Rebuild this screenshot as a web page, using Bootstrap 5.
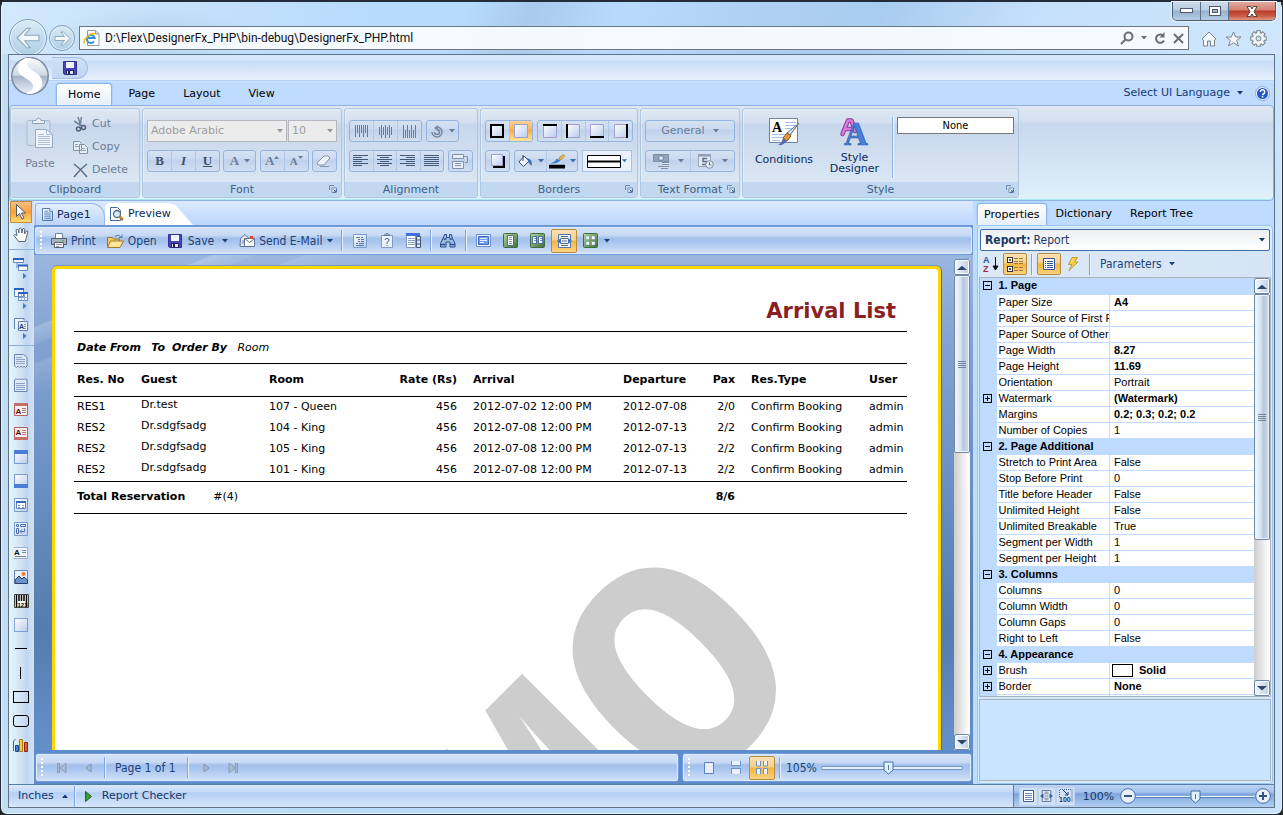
<!DOCTYPE html>
<html lang="en">
<head>
<meta charset="utf-8">
<meta name="viewport" content="width=device-width, initial-scale=1">
<title>DesignerFx_PHP</title>
<link href="https://cdn.jsdelivr.net/npm/bootstrap@5.3.0/dist/css/bootstrap.min.css" rel="stylesheet">
<style>
:root{--ui:"DejaVu Sans",Verdana,sans-serif;--cond:"DejaVu Sans Condensed","DejaVu Sans",Tahoma,sans-serif;--navy:#0b2a5e}
body{font:11px/14px var(--ui);color:#000;background:#222;overflow:hidden}
button{font:inherit;color:inherit;background:none;border:0;padding:0;display:flex;align-items:center;justify-content:center;white-space:nowrap}
svg{display:block;flex:none}
.cond{font:12px/16px var(--cond)}
.fill0{flex:1 1 0;min-width:0;min-height:0}
/* window frame */
.win{border:1px solid #232c38;border-top-width:2px;border-radius:7px;padding:0 7px 6px;background:linear-gradient(90deg,#c4def4 0,#b9dcfa 30%,#b4daf9 70%,#c9e4fb 100%);box-shadow:inset 0 0 0 1px #e7f4fd}
.chrome{height:52px;background:radial-gradient(ellipse 100px 30px at 150px 36px,#a3c6dc80,#0000),linear-gradient(115deg,#d3e9fb 0,#c7e1fa 12%,#b8dcfd 28%,#b6dbfd 36%,#a9caea 41%,#b8dbfc 48%,#b0d3f3 56%,#a8ccef 68%,#c5e0fb 80%,#cfe6fc 100%);margin:0 -6px;padding:24px 14px 0 7px;gap:2px}
.navc{border-radius:50%;border:1px solid #7f9fb9;background:linear-gradient(#d9ebf7,#afcee4);box-shadow:inset 0 0 0 1px #e8f3fa}
.nav1{width:38px;height:38px;margin-top:-7px}
.nav2{width:26px;height:26px;margin:-1px 0 0}
.addr{height:24px;border:1px solid #6d7680;background:#f9fcffee;padding:0 4px 0 3px;margin-left:2px}
.addr input{border:0;background:none;outline:0;font:12px/18px Roboto,"Noto Sans",sans-serif;color:#111;padding:0 0 0 5px}
.capt{position:absolute;top:0;right:6px;height:19px;border:1px solid #4d5d73;border-top:0;border-radius:0 0 5px 5px;overflow:hidden;box-shadow:0 0 0 1px #e8f3fb}
.capt button{width:28px;background:linear-gradient(#cddcec 0,#b9cce1 45%,#98b1cd 50%,#b5cde4 100%);border-right:1px solid #5d6f88}
.capt button.cx{width:46px;background:linear-gradient(#e3a99e 0,#d27f70 45%,#b93a27 50%,#c9604b 80%,#e89b83 100%);border:0}
.app{border:1px solid #5f7487;background:#bfdbff}
.quick{height:26px;background:linear-gradient(#d7e7fb 0,#d7e7fb 5px,#c8dcf7 6px,#e5f0fd 24px);border-bottom:1px solid #b0d2f8;padding:2px 0 0 43px}
.quick button{width:36px;height:22px;border:1px solid #a4bfe5;border-left:0;border-radius:0 11px 11px 0;background:linear-gradient(#cfe0f6,#c2d7f2)}
.orb{position:absolute;left:9px;top:54px;z-index:3}
.tabs{height:24px;padding-left:47px;background:linear-gradient(#cfe3fd 0,#bfdbff 2px);gap:4px}
.tabs .rt{height:22px;padding:0 12px;align-self:flex-end}
.rt.on{border:1px solid #8db7ea;border-bottom:0;border-radius:4px 4px 0 0;background:linear-gradient(#fff 0,#e6effa 100%);padding:0 11px;box-shadow:inset 1px 1px 0 #fff,0 0 2px #79b5f5}
.ribbon{height:96px;border:1px solid #8db2e3;border-radius:4px;background:linear-gradient(#dfe8f3 0,#d3dff0 16px,#c8d8ed 17px,#dcebf7 85%,#dff3fc 100%);padding:2px 0;gap:2px;box-shadow:inset 0 -1px #a9e8f7}
.grp{height:90px;border:1px solid #aec7e0;border-radius:3px;background:linear-gradient(#dfe8f3 0,#d3dff0 14px,#c7d6eb 15px,#d9e6f3 72px);box-shadow:inset 1px 1px #f2f7fc80}
.grp>footer{height:15px;background:#c1d8f0;color:#3e5f87;text-align:center;line-height:15px;position:relative;border-radius:0 0 3px 3px}
.grp>footer svg{position:absolute;right:4px;top:3px}
.grp>.gb{height:73px;padding:11px 4px 0;gap:8px}
.dim{color:#6b7e96}
.bset{height:22px;border:1px solid #95b5df;border-radius:3px;background:linear-gradient(#d5e2f3 0,#cbdaf0 40%,#bfd1ec 45%,#d1dff1 100%);overflow:hidden}
.bset button{width:24px;height:20px;border-left:1px solid #b0c7e7}
.bset button:first-child{border-left:0;width:23px}
.bset .w32{width:31px!important}.bset .wide{width:88px!important}.bset .half{width:44px!important;gap:8px}
.gap4{gap:5px}
.on-o{background:linear-gradient(#f9d49a 0,#fbb35a 40%,#fca643 45%,#ffe699 100%)!important}
.fsel{height:22px;border:1px solid #b5b9bf;border-radius:0;background-color:#ececec;appearance:none;color:#9d9d9d!important;font:11px/20px var(--ui);padding:0 14px 0 3px;opacity:1;background-image:url("data:image/svg+xml,%3Csvg xmlns='http://www.w3.org/2000/svg' width='6' height='4'%3E%3Cpath d='M0 0h6L3 3.500z' fill='%23959595'/%3E%3C/svg%3E");background-repeat:no-repeat;background-position:right 3px center}
.big{color:var(--navy);flex-direction:column}
.vline{width:1px;background:#8db4e4;box-shadow:1px 0 #edf5fd}
/* work area */
.left{width:25px;background:linear-gradient(90deg,#e4f7fc 0,#cfe0f5 55%,#bfd5f0 68%,#d4e2f5 100%)}
.left button{width:24px;height:24px;flex:none}
.left .sub{height:30px;flex-direction:column;align-items:center}
.left .sub .ar{margin:2px 0 0 8px}
.left hr{margin:2px 0 3px;height:1px;opacity:1;border:0;background:#8fb1dc;flex:none}
.left .first{height:22px;width:22px;margin-left:1px;border:1px solid #c09040;background:linear-gradient(#f5c083,#f9a13b 50%,#ffda73)}
.center{background:#6a95d2}
.docs{height:25px;background:linear-gradient(#dceaff,#bcd6fd);padding:2px 0 0 1px;border-bottom:1px solid #6e97cc;color:var(--navy)}
.docs .dt{height:22px;border-radius:3px 14px 0 0;padding-left:6px;gap:4px;justify-content:flex-start}
.dt.a{width:70px;border:1px solid #93b6e6;border-bottom:0;background:linear-gradient(#e4effe,#bcd4f8)}
.dt.b{width:90px;background:#fff;clip-path:polygon(0 3px,3px 0,64px 0,70px 2px,74px 6px,88px 22px,0 22px);padding-left:5px!important}
.bar{height:29px;border:1px solid #6d9be0;border-radius:3px;background:linear-gradient(#d5e3f8 0,#c8daf5 30%,#a2c0ea 42%,#a8c5ef 55%,#d3e2f8 100%);box-shadow:inset 0 0 0 1px #dfeafb;color:#1c4377}
.bar button{height:24px}
.grip{width:3px;height:19px;background:radial-gradient(circle 1px at 1px 1px,#fff 99%,#0000) 0 0/3px 4px;margin-left:5px}
.sepa{width:2px;height:21px;background:linear-gradient(90deg,#7fa6dc 50%,#e8f1fd 50%)}
.selo{border:1px solid #b78d3d!important;border-radius:2px;background:linear-gradient(#fbe2b4 0,#f9cf89 45%,#f3b53f 50%,#fbd181 100%)!important}
.ib{width:27px}
.canvas{background:linear-gradient(158deg,#0000 0 66px,#ffffff38 68px,#ffffff14 82px,#0000 84px 100px,#ffffff20 102px,#0000 130px),linear-gradient(#9ab7e0 0,#85a5d3 15%,#6f93c6 40%,#557cae 76%,#6490cb 100%)}
.sheet{margin:11px 13px 0 18px;border:3px solid #fcd700;border-bottom:0;border-radius:5px 5px 0 0;background:#fff;overflow:hidden;position:relative;padding:29px 31px 0 19px;box-shadow:0 -1px #7696bd,1px 0 #4e6a84}
.sheet h1{font:bold 21px/26px var(--ui);color:#8b1f23;text-align:right;margin:0;padding:0 11px 7px 0}
.params{height:33px;border-top:1px solid #000;border-bottom:1px solid #000;padding:0 3px;line-height:31px;font-style:italic;white-space:pre}
.rep{width:100%;table-layout:fixed;border-collapse:collapse}
.rep td,.rep th{padding:0 3px;height:21px;vertical-align:middle;white-space:nowrap}
.rep thead th{height:32px;border-bottom:1px solid #000}
.rep .r{text-align:right;padding-right:13px}
.rep .g{padding-bottom:4px}
.rep tbody tr:last-child td{height:22px}
.rep tfoot td{height:32px;border-top:1px solid #000;border-bottom:1px solid #000;font-weight:bold}
.wm{position:absolute;left:0;top:0;width:100%;height:100%;z-index:0;pointer-events:none}
.wm text{font:bold 318px "Liberation Mono",monospace;fill:#cdcdcd}
.sb{width:16px;background:linear-gradient(90deg,#cdcdcd,#f2f2f2 70%,#fff)}
.sb button{height:16px;width:16px;border:1px solid #6a87b0;border-radius:2px;background:linear-gradient(90deg,#f3f8fd,#bcd0e8);box-shadow:inset 0 0 0 1px #fff}
.sb .th{border:1px solid #7088a8;border-radius:2px;background:linear-gradient(90deg,#f5f9fe 0,#d8e3f1 40%,#b5c7df 60%,#d3def0 100%);box-shadow:inset 0 0 0 1px #eef4fb}
.sb .th i{width:8px;height:7px;background:repeating-linear-gradient(#74849a 0 1px,#fff0 1px 2px)}
.foot{height:34px;padding:3px 1px 2px;gap:3px;background:#5e8cca}
input.rg{appearance:none;height:16px;background:none;margin:0;min-width:0}
.rg::-webkit-slider-runnable-track{height:4px;border:1px solid #7294c2;border-radius:2px;background:#e6effb}
.rg::-webkit-slider-thumb{appearance:none;width:11px;height:14px;margin-top:-6px;background:url("data:image/svg+xml,%3Csvg xmlns='http://www.w3.org/2000/svg' width='11' height='14'%3E%3Cpath d='M1 1h9v8l-4.500 4L1 9z' fill='%23dff1fb' stroke='%23406fa8'/%3E%3Cpath d='M5.500 4v5' stroke='%2357799f'/%3E%3C/svg%3E")}
/* property panel */
.props{width:301px;padding:2px 1px 0 4px;background:#bfdbff}
.ptabs .rt{height:22px;color:#000;padding:0 9px}
.ptabs .rt.on{padding:0 6px}
.pbody{border:1px solid #9cc3ef;border-radius:4px;background:#d3e8fb;padding:3px 1px 2px;box-shadow:inset 0 0 0 1px #d5f3fc}
.combo{height:22px;border:1px solid #3f6ea8;border-radius:2px;background:linear-gradient(#eceff2,#fff);color:#183a63;margin:0 1px;padding:0 4px;width:auto;justify-content:flex-start;gap:3px}
.pt{height:26px;color:#1c4377;background:linear-gradient(90deg,#dbe8f8,#d6e5f5)}
.pt button{height:22px;width:24px}
.gridbox{border:1px solid #a8b3bd;background:#bfdbff;overflow:hidden}
.pg{width:100%;table-layout:fixed;border-collapse:collapse;font:11px/15px "Liberation Sans",Arial,sans-serif}
.pg td,.pg th{height:16px;padding:0 0 0 3px;white-space:nowrap;overflow:hidden;font-weight:normal}
.pg tbody td{border-left:1px solid #bfdbff;border-bottom:1px solid #bfdbff;background:#fff;padding-left:4px}
.pg tbody th{border-bottom:1px solid #bfdbff;background:#fff;padding-left:2px}
.pg tbody td:first-child,.pg tr.h th{background:#bfdbff;border-color:#bfdbff}
.pg td:first-child{padding:0 0 0 2px!important}
.pg .h th,.pg b{font-weight:bold;padding-left:2px}.pg b{padding:0}
.tg{width:9px;height:9px;border:1px solid #000;background:linear-gradient(#000,#000) center/5px 1px no-repeat}
.tg.plus{background:linear-gradient(#000,#000) center/5px 1px no-repeat,linear-gradient(#000,#000) center/1px 5px no-repeat}
.sw{width:21px;height:13px;border:1px solid #000;display:inline-block;vertical-align:top;margin:1px 6px 0 -2px;background:#fff}
.desc{height:82px;border:1px solid #a8b3bd;background:#c9e4ff;margin-top:2px}
.status{height:23px;border-top:1px solid #567fae;background:linear-gradient(#d9e8fb 0,#c8dcf8 6px,#b3cff5 8px,#d8e6fb 100%);color:#15376b}
.zoomz{width:261px;border-left:1px solid #567fae;background:linear-gradient(#bcd3f3 0,#a5c3ec 7px,#7ea6dd 9px,#b3cff2 100%);padding:0 3px 0 5px}
.zoomz .zb{width:20px;height:19px;border:1px solid #bdd2ee;background:#d0e0f5}
.zoomz .rg::-webkit-slider-runnable-track{height:1px;border:0;background:#eef5fd;box-shadow:0 1px #547fb5}
</style>
</head>
<body>
<svg width="0" height="0" class="position-absolute">
<defs>
<linearGradient id="pg1" x2="1" y2="1"><stop stop-color="#fff"/><stop offset="1" stop-color="#b9cdec"/></linearGradient>
<linearGradient id="gr1" x2="1" y2="1"><stop stop-color="#b3dca4"/><stop offset="1" stop-color="#3b6b35"/></linearGradient>
<linearGradient id="or1" y2="1" x2="0"><stop stop-color="#f8fafc"/><stop offset=".48" stop-color="#cfd8e5"/><stop offset=".5" stop-color="#a5b4ca"/><stop offset="1" stop-color="#e9eff7"/></linearGradient>
<symbol id="dn" viewBox="0 0 6 4"><path d="M0 0h6L3 3.500z" fill="currentColor"/></symbol>
<symbol id="up" viewBox="0 0 6 4"><path d="M0 4h6L3 .5z" fill="currentColor"/></symbol>
<symbol id="rt" viewBox="0 0 4 6"><path d="M0 0v6l3.500-3z" fill="#4a78b8"/></symbol>
<symbol id="dlg" viewBox="0 0 8 8"><path d="M.5 5V.5H5" fill="none" stroke="#6c8db5"/><path d="M3 3h4.500v4.500H3z" fill="#fff" stroke="#6c8db5"/><path d="M4.500 4.500L7 7M7 4.500V7H4.500" stroke="#3b628f" fill="none"/></symbol>
<symbol id="save" viewBox="0 0 14 14"><path d="M.5.5h13v13h-12l-1-1z" fill="#4544b4" stroke="#343394"/><path d="M3 1h8v6H3z" fill="#eef3ff"/><path d="M3 9h8v5H3z" fill="#26266a"/><path d="M4 10h6v3H4z" fill="#dbe2f5"/><path d="M5 10h2v3H5z" fill="#223"/></symbol>
<symbol id="doc" viewBox="0 0 12 14"><path d="M.5.5h8l3 3v10H.5z" fill="url(#pg1)" stroke="#3f6dab"/><path d="M8.500.5v3h3" fill="#fff" stroke="#3f6dab"/><path d="M2.500 3.500h4m-4 2h7m-7 2h7m-7 2h7m-7 2h7" stroke="#5f86bd"/></symbol>
<symbol id="win" viewBox="0 0 14 14"><path d="M.5.5h13v13H.5z" fill="url(#pg1)" stroke="#7b9acb"/></symbol>
<symbol id="lines" viewBox="0 0 16 12"><path d="M0 .5h15M0 2.500h15M0 4.500h15M0 6.500h15M0 8.500h15M0 10.500h15" stroke="#44597a"/></symbol>
<symbol id="alL" viewBox="0 0 16 12"><path d="M0 .5h15M0 2.500h9M0 4.500h15M0 6.500h9M0 8.500h15M0 10.500h9" stroke="#44597a"/></symbol>
<symbol id="alC" viewBox="0 0 16 12"><path d="M0 .5h15M3 2.500h9M0 4.500h15M3 6.500h9M0 8.500h15M3 10.500h9" stroke="#44597a"/></symbol>
<symbol id="alR" viewBox="0 0 16 12"><path d="M0 .5h15M6 2.500h9M0 4.500h15M6 6.500h9M0 8.500h15M6 10.500h9" stroke="#44597a"/></symbol>
<symbol id="bx" viewBox="0 0 14 14"><path d="M.5.5h13v13H.5z" fill="url(#pg1)" stroke="#a29fd0"/></symbol>
<symbol id="grn" viewBox="0 0 15 15"><rect x=".5" y=".5" width="14" height="14" rx="1" fill="url(#gr1)" stroke="#3f6e3a"/></symbol>
<symbol id="two" viewBox="0 0 10 14"><path d="M0 0v5h10V0M0 14V8h10v6" fill="#e6effb" stroke="#5b83bd"/></symbol>
</defs></svg>

<div class="win vh-100 d-flex flex-column position-relative">
<header class="chrome d-flex align-items-start flex-shrink-0">
 <button class="navc nav1" aria-label="Back"><svg width="28" height="24" viewBox="0 0 24 22"><path d="M2 11L11 2h3L9 8.500h13v5H9l5 6.500h-3z" fill="#f3f8fb" stroke="#8ba8be"/></svg></button>
 <button class="navc nav2" aria-label="Forward"><svg width="17" height="15" viewBox="0 0 17 15"><path d="M16 7.500L9.500 1H7l3.500 4.500H1v4h9.500L7 14h2.500z" fill="#f3f8fb" stroke="#8ba8be"/></svg></button>
 <div class="addr d-flex align-items-center flex-grow-1">
  <svg width="17" height="16" viewBox="0 0 17 16"><path d="M4.500.5h8l3.500 3v12H4.500z" fill="#fff" stroke="#999"/><path d="M12.500.5v3.500H16" fill="#ddd" stroke="#999"/><path d="M11 11.500a4 4 0 1 1 .7-3.500H4" fill="none" stroke="#2f93dc" stroke-width="2"/><path d="M1.500 13.500C-1 10 8 2 12 4" fill="none" stroke="#f2b90f" stroke-width="1.500"/></svg>
  <input class="flex-grow-1" aria-label="Address" value="D:\Flex\DesignerFx_PHP\bin-debug\DesignerFx_PHP.html">
  <div class="d-flex align-items-center" style="color:#6a6f75;gap:7px">
   <button aria-label="Search"><svg width="14" height="14" viewBox="0 0 14 14" fill="none" stroke="currentColor" stroke-width="2"><circle cx="8.500" cy="5.500" r="4"/><path d="M5.500 8.500L1 13"/></svg></button>
   <button aria-label="Search options"><svg width="6" height="4"><use href="#dn"/></svg></button>
   <button aria-label="Refresh"><svg width="12" height="13" viewBox="0 0 12 13"><path d="M9.500 4A4.200 4.200 0 1 0 10 8.500" fill="none" stroke="currentColor" stroke-width="2"/><path d="M5.500 5.500h5V0z" fill="currentColor"/></svg></button>
   <button aria-label="Stop"><svg width="11" height="11" viewBox="0 0 11 11"><path d="M1 1l9 9M10 1l-9 9" stroke="currentColor" stroke-width="2"/></svg></button>
  </div>
 </div>
 <div class="d-flex align-items-center gap-2 ms-2 pt-1" style="padding-left:2px">
  <button aria-label="Home"><svg width="16" height="16" viewBox="0 0 16 16"><path d="M1 8l7-7 7 7-1.500 1V15h-4v-5h-3v5h-4V9z" fill="#f5f8fa" stroke="#77868f"/></svg></button>
  <button aria-label="Favorites"><svg width="17" height="16" viewBox="0 0 17 16"><path d="M8.500 1l2.200 5H16l-4.300 3.500 1.700 5.500-4.900-3.200L3.600 15l1.700-5.500L1 6h5.300z" fill="#f5f8fa" stroke="#77868f"/></svg></button>
  <button aria-label="Tools"><svg width="17" height="17" viewBox="0 0 17 17"><g stroke="#77868f" stroke-width="4.500"><path d="M8.500.3v16.400M.3 8.500h16.400M2.700 2.700l11.600 11.600M14.300 2.700L2.700 14.300"/></g><circle cx="8.500" cy="8.500" r="6.500" fill="#77868f"/><g stroke="#f5f8fa" stroke-width="2.500"><path d="M8.500 1.300v14.400M1.300 8.500h14.400M3.400 3.400l10.200 10.200M13.600 3.400L3.400 13.600"/></g><circle cx="8.500" cy="8.500" r="5.500" fill="#f5f8fa"/><circle cx="8.500" cy="8.500" r="2.500" fill="#cfe3f5" stroke="#77868f"/></svg></button>
 </div>
</header>
<div class="capt d-flex">
 <button aria-label="Minimize"><svg width="13" height="6" viewBox="0 0 13 6"><rect x=".5" y=".5" width="12" height="4" fill="#fff" stroke="#505a6b"/></svg></button>
 <button aria-label="Maximize"><svg width="12" height="10" viewBox="0 0 12 10"><rect x=".5" y=".5" width="11" height="9" fill="#fff" stroke="#505a6b"/><rect x="3.500" y="3.500" width="5" height="3" fill="#9db4cf" stroke="#505a6b"/></svg></button>
 <button class="cx" aria-label="Close"><svg width="12" height="11" viewBox="0 0 12 11"><path d="M1 .5h3.500L6 3 7.500.5H11L8 5.500l3 5H7.500L6 8l-1.500 2.500H1l3-5z" fill="#fff" stroke="#54423f"/></svg></button>
</div>
<button class="orb" aria-label="Main menu"><svg width="40" height="40" viewBox="0 0 40 40"><circle cx="20" cy="20" r="19" fill="#7b8ba2"/><circle cx="20" cy="20" r="17.500" fill="url(#or1)"/><path d="M16 3C8 7 6 15 14 20c6 4 11 6 10 12-1 3-4 5-7 5 10 1 15-6 14-12-1-7-10-9-14-14-2-3-1-6 2-8z" fill="#fff" stroke="#fff" stroke-width="2"/></svg></button>

<div class="app fill0 d-flex flex-column">
 <div class="quick flex-shrink-0"><button aria-label="Save"><svg width="14" height="14"><use href="#save"/></svg></button></div>
 <nav class="tabs d-flex position-relative flex-shrink-0">
  <button class="rt on">Home</button><button class="rt">Page</button><button class="rt">Layout</button><button class="rt">View</button>
  <button class="ms-auto" style="color:#153c78;gap:7px">Select UI Language <svg width="6" height="4"><use href="#dn"/></svg></button>
  <button class="ms-1 me-0 px-1" aria-label="Help"><svg width="15" height="15" viewBox="0 0 15 15"><circle cx="7.500" cy="7.500" r="7" fill="#e8f1ff" stroke="#8aa9dd"/><circle cx="7.500" cy="7.500" r="5.500" fill="#2356c9"/><path d="M5.300 6a2.200 2.200 0 1 1 3.200 2q-1 .5-1 1.200M7.500 10v1.600" fill="none" stroke="#fff" stroke-width="1.500"/></svg></button>
 </nav>
 <div class="ribbon d-flex flex-shrink-0">
  <section class="grp" style="width:130px"><div class="gb d-flex gap-0 dim px-1 pt-1">
    <button class="flex-column gap-2 align-self-start pt-1" style="width:50px"><svg width="28" height="32" viewBox="0 0 28 32"><rect x="1" y="3.500" width="23" height="25" rx="2" fill="#cfdceb" stroke="#a9bcd3"/><path d="M6.500 6.500v-3h3.500q2.500-5 5 0h3.500v3z" fill="#e9eff5" stroke="#8fa4bd"/><path d="M9.500 12.500h11l6 5v13h-17z" fill="#f0f5fb" stroke="#93a9c4"/><path d="M20.500 12.500v5h6M12 17.500h6m-6 2h12m-12 2h12m-12 2h12m-12 2h12m-12 2h12" fill="none" stroke="#adc0d8"/></svg>Paste</button>
    <div class="d-flex flex-column align-items-start ps-2" style="gap:1px">
     <button class="gap-1" style="height:22px"><svg width="15" height="15" viewBox="0 0 15 15"><path d="M5 0l3 9M8.500 0L7 9M1 4l8 5" stroke="#72839a" stroke-width="1.500"/><circle cx="5.500" cy="12" r="2" fill="none" stroke="#4f6078" stroke-width="1.500"/><circle cx="10.500" cy="10.500" r="2" fill="none" stroke="#4f6078" stroke-width="1.500"/></svg>Cut</button>
     <button class="gap-1" style="height:22px"><svg width="15" height="13" viewBox="0 0 15 13"><path d="M.5.5h6l2 2v7h-8zM6.500 3.500h5l3 3v6h-8z" fill="#e6edf5" stroke="#7e92ab"/><path d="M2 3.500h3m-3 2h4m2 2h4m-4 2h5" stroke="#90a3bb"/></svg>Copy</button>
     <button class="gap-1" style="height:22px"><svg width="15" height="15" viewBox="0 0 15 15"><path d="M1 1q7 5 13 13M14 1Q7 6 1 14" stroke="#5d6d83" stroke-width="1.500" fill="none"/></svg>Delete</button>
    </div></div><footer>Clipboard</footer></section>

  <section class="grp" style="width:200px"><div class="gb d-flex flex-column">
    <div class="d-flex" style="gap:1px"><select class="fsel" style="width:140px" disabled aria-label="Font"><option>Adobe Arabic</option></select><select class="fsel" style="width:49px" disabled aria-label="Font size"><option>10</option></select></div>
    <div class="d-flex justify-content-between dim" style="font:bold 13px/20px 'Liberation Serif',serif">
     <div class="bset d-flex" style="color:#3e506b"><button>B</button><button><em>I</em></button><button><u>U</u></button></div>
     <div class="bset d-flex"><button class="w32 gap4">A <svg width="6" height="4"><use href="#dn"/></svg></button></div>
     <div class="bset d-flex"><button aria-label="Grow font">A<svg width="5" height="12" viewBox="0 0 5 12"><path d="M0 4h5L2.500 1z" fill="currentColor"/></svg></button><button aria-label="Shrink font"><small style="font-size:11px">A</small><svg width="5" height="12" viewBox="0 0 5 12"><path d="M0 1h5L2.500 4z" fill="currentColor"/></svg></button></div>
     <div class="bset d-flex"><button aria-label="Clear"><svg width="16" height="12" viewBox="0 0 16 12"><path d="M1 8L8 1h4l2 2-6 7H2z" fill="#eef3f8" stroke="#8496ad"/><path d="M4 11.500h9" stroke="#8496ad"/></svg></button></div>
    </div></div><footer>Font<svg width="8" height="8"><use href="#dlg"/></svg></footer></section>

  <section class="grp" style="width:134px"><div class="gb d-flex flex-column">
    <div class="d-flex gap-1"><div class="bset d-flex"><button aria-label="Top"><svg width="16" height="13" viewBox="0 0 16 13"><path d="M1.500 0v12m2-12v8m2-8v12m2-12v8m2-8v12m2-12v8m2-8v12" stroke="#6a7c96"/></svg></button><button aria-label="Middle"><svg width="16" height="13" viewBox="0 0 16 13"><path d="M1.500 2v8m2-10v13m2-11v8m2-10v13m2-11v8m2-10v13m2-11v8" stroke="#6a7c96"/></svg></button><button aria-label="Bottom"><svg width="16" height="13" viewBox="0 0 16 13"><path d="M1.500 0v13m2-8v8m2-13v13m2-8v8m2-13v13m2-8v8m2-13v13" stroke="#6a7c96"/></svg></button></div>
     <div class="bset d-flex dim"><button class="w32 gap4" aria-label="Rotate"><svg width="14" height="13" viewBox="0 0 14 13"><path d="M7 2a5 5 0 1 1-5 5M7 4.500A2.500 2.500 0 1 1 4.500 7" fill="none" stroke="#77889f" stroke-width="1.500"/><path d="M8 0v6L4 3z" fill="#77889f"/></svg><svg width="6" height="4"><use href="#dn"/></svg></button></div></div>
    <div class="d-flex gap-1"><div class="bset d-flex"><button aria-label="Left"><svg width="16" height="12"><use href="#alL"/></svg></button><button aria-label="Center"><svg width="16" height="12"><use href="#alC"/></svg></button><button aria-label="Right"><svg width="16" height="12"><use href="#alR"/></svg></button><button aria-label="Justify"><svg width="16" height="12"><use href="#lines"/></svg></button></div>
     <div class="bset d-flex"><button aria-label="Wrap"><svg width="17" height="15" viewBox="0 0 17 15"><path d="M.5.5h11v4H.5zM.5 7.500h11v7H.5z" fill="#e8eef6" stroke="#8193ab"/><path d="M12 2.500h3.500v6H13m-10 1h6m-6 2h6" fill="none" stroke="#8193ab"/></svg></button></div></div>
   </div><footer>Alignment</footer></section>

  <section class="grp" style="width:158px"><div class="gb d-flex flex-column">
    <div class="d-flex gap-1"><div class="bset d-flex"><button aria-label="All borders"><svg width="14" height="14" viewBox="0 0 14 14"><rect x="1" y="1" width="12" height="12" fill="url(#pg1)" stroke="#000" stroke-width="2"/></svg></button><button class="on-o" aria-label="No borders"><svg width="14" height="14"><use href="#bx"/></svg></button></div>
     <div class="bset d-flex"><button aria-label="Top border"><svg width="14" height="14"><use href="#bx"/><path d="M0 1h14" stroke="#000" stroke-width="2"/></svg></button><button aria-label="Left border"><svg width="14" height="14"><use href="#bx"/><path d="M1 0v14" stroke="#000" stroke-width="2"/></svg></button><button aria-label="Bottom border"><svg width="14" height="14"><use href="#bx"/><path d="M0 13h14" stroke="#000" stroke-width="2"/></svg></button><button aria-label="Right border"><svg width="14" height="14"><use href="#bx"/><path d="M13 0v14" stroke="#000" stroke-width="2"/></svg></button></div></div>
    <div class="d-flex gap-1"><div class="bset d-flex"><button aria-label="Shadow"><svg width="14" height="14" viewBox="0 0 14 14"><path d="M2 2h12v12H2z"/><path d="M.5.5h11v11H.5z" fill="url(#pg1)" stroke="#a29fd0"/></svg></button></div>
     <div class="bset d-flex" style="color:#3c6ca8"><button class="w32 gap4" aria-label="Fill"><svg width="15" height="14" viewBox="0 0 15 14"><path d="M6 2L1 8l4.500 4.500L11 7z" fill="#eef4fb" stroke="#34507b"/><path d="M5 1v6" stroke="#34507b"/><path d="M9 4q6 1 4.500 8Q10 9 9 4z" fill="#3f6fb5"/></svg><svg width="6" height="4"><use href="#dn"/></svg></button><button class="w32 gap-1" aria-label="Line color"><svg width="17" height="15" viewBox="0 0 18 15"><path d="M0 11h17v4H0z" fill="#000"/><path d="M1 9.500q5-1 7-5l4 2q-3 4-11 3z" fill="#3e7bd0"/><path d="M10 4.500L15 0l1.500 1.500L12.500 6z" fill="#f4bb2b" stroke="#93641a" stroke-width=".6"/></svg><svg width="6" height="4"><use href="#dn"/></svg></button></div>
     <button class="justify-content-between px-1" style="width:50px;height:22px;border:1px solid #a7c2e6;background:#e8f1fc;color:#3c6ca8" aria-label="Line style"><svg width="34" height="13" viewBox="0 0 34 13"><path d="M.5.5h33v12H.5z" fill="#fff" stroke="#000"/><path d="M0 6.500h34" stroke="#000" stroke-width="2"/></svg><svg width="5" height="4"><use href="#dn"/></svg></button></div>
   </div><footer>Borders<svg width="8" height="8"><use href="#dlg"/></svg></footer></section>

  <section class="grp" style="width:100px"><div class="gb d-flex flex-column dim">
    <div class="bset d-flex"><button class="wide gap-2">General <svg width="6" height="4"><use href="#dn"/></svg></button></div>
    <div class="bset d-flex"><button class="half" aria-label="Currency"><svg width="17" height="15" viewBox="0 0 17 15"><path d="M.5.5h15v7H.5z" fill="#93a4bc" stroke="#7d8ea7"/><circle cx="8" cy="4" r="2.500" fill="#dbe4ef" stroke="#6e809b"/><path d="M9 8h7v6.500H9z" fill="#dbe4ef"/><path d="M9 8.500h7M9 10.500h7M5 12.500h4m0 0h7M8 14.500h7" stroke="#7d8ea7"/></svg><svg width="6" height="4"><use href="#dn"/></svg></button><button class="half" aria-label="Date"><svg width="16" height="15" viewBox="0 0 16 15"><path d="M.5.5h12v12H.5z" fill="#e1e8f1" stroke="#9aaac0"/><path d="M0 1.500h13" stroke="#8c9cb4" stroke-width="2"/><path d="M9 4.500H5v3h3.500v3H4" fill="none" stroke="#5f7089" stroke-width="1.500"/><circle cx="11.500" cy="10.500" r="3.800" fill="#e7edf5" stroke="#7d8ea7"/><path d="M11.500 8v3h2" fill="none" stroke="#5f7089"/></svg><svg width="6" height="4"><use href="#dn"/></svg></button></div>
   </div><footer>Text Format<svg width="8" height="8"><use href="#dlg"/></svg></footer></section>

  <section class="grp" style="width:277px"><div class="gb d-flex gap-0 pt-1">
    <button class="big justify-content-start pt-1" style="width:74px;gap:6px"><svg width="32" height="30" viewBox="0 0 32 30"><path d="M1.500 1.500h28v24h-28z" fill="#fff" stroke="#6d82a8"/><path d="M17 5.500h11m-11 3h11m-11 3h11M4 17.500h20M4 20.500h12M4 23.500h8" stroke="#a7bfe4"/><text x="4" y="15" font-family="Liberation Serif" font-weight="bold" font-size="14">A</text><path d="M31 6l-9 12-3-2z" fill="#d9dee6" stroke="#60718c"/><path d="M19 16l4 3-4 5-4-3z" fill="#e3973b" stroke="#8a571b"/><path d="M15 21l4 3q-4 5-9 4 4-2 5-7z" fill="#6166aa"/></svg><span>Conditions</span></button>
    <button class="big justify-content-start pt-1" style="width:67px;line-height:11px;gap:6px"><svg width="32" height="29" viewBox="0 0 32 29"><g fill="none"><path d="M3.500 17L9 3.500h3.500L16 14M6.500 12H14" stroke="#8b3a95" stroke-width="4.500" stroke-linejoin="round" stroke-linecap="round"/><path d="M3.500 17L9 3.500h3.500L16 14M6.500 12H14" stroke="#d77bdc" stroke-width="2.500" stroke-linejoin="round" stroke-linecap="round"/></g><text x="5" y="28" font-family="Liberation Serif" font-weight="bold" font-size="33" fill="#4a80dc" stroke="#2f5bab" stroke-width=".7">A</text></svg><span>Style<br>Designer</span></button>
    <div class="vline mt-1 mb-1 ms-1 me-1"></div>
    <button class="flex-grow-1 mt-1" style="height:17px;border:1px solid #777;background:#fff;font:11px/15px 'DejaVu Sans Condensed',sans-serif;color:#000">None</button>
   </div><footer>Style<svg width="8" height="8"><use href="#dlg"/></svg></footer></section>
 </div>

 <main class="fill0 d-flex">
  <aside class="left d-flex flex-column overflow-hidden flex-shrink-0">
   <button class="first" aria-label="Select"><svg width="10" height="16" viewBox="0 0 10 16"><path d="M.5.5v12l3-3 2.500 5.500 2-1-2.500-5H9.500z" fill="#fff" stroke="#4d5a70"/></svg></button>
   <button aria-label="Hand"><svg width="16" height="16" viewBox="0 0 16 16"><path d="M5.500 14.500L1 8.500q0-2 3 0L3 3q1.500-1.500 2.500.5L6 6V2q1.500-2 2.300 0L9 6l.7-4q1.500-1.500 2 .3L11.500 7 13.300 4q1.500-.5 1.500 1L13 12l-1 2.500z" fill="#fff" stroke="#56657c"/></svg></button>
   <hr>
   <button class="sub" aria-label="Bands"><svg width="16" height="13" viewBox="0 0 16 13"><path d="M.5.5h10v4H.5zM5.500 7.500h9v5h-9z" fill="#fff" stroke="#5f86c8"/><path d="M0 1h11M5 7.500h10" stroke="#2c5fc2" stroke-width="2"/><path d="M4 5v5" stroke="#5f86c8"/></svg><svg class="ar" width="4" height="6"><use href="#rt"/></svg></button>
   <button class="sub" aria-label="Tables"><svg width="14" height="13" viewBox="0 0 14 13"><path d="M.5.5h9v8h-9zM4.500 4.500h9v8h-9z" fill="#fff" stroke="#5f86c8"/><path d="M0 1h10M4 5h10" stroke="#2c5fc2" stroke-width="2"/><path d="M7.500 6v7m3-7v7M5 9.500h9" stroke="#86a6d8"/></svg><svg class="ar" width="4" height="6"><use href="#rt"/></svg></button>
   <button class="sub" aria-label="Components"><svg width="14" height="13" viewBox="0 0 14 13"><path d="M.5 11V.5H10v2M4.500 3.500h9v9h-9z" fill="#eef3fb" stroke="#5f82b8"/><text x="5" y="11" font-family="Liberation Sans" font-weight="bold" font-size="7" fill="#1b3d7a">A</text><path d="M10 6.500h2m-2 2h2m-2 2h2" stroke="#7b96c0"/></svg><svg class="ar" width="4" height="6"><use href="#rt"/></svg></button>
   <hr>
   <button aria-label="Report title"><svg width="14" height="14" viewBox="0 0 14 14"><path d="M.5 12V.5h9l3.500 3V12l-1.500 1.500-1.500-1.500-1.500 1.500L7 12l-1.500 1.500L4 12l-1.500 1.500z" fill="#dfe8f6" stroke="#6b85b0"/><path d="M2 3.500h6m-6 2h9m-9 2h9m-9 2h9" stroke="#8ea5ca"/></svg></button>
   <button aria-label="Report summary"><svg width="14" height="14" viewBox="0 0 14 14"><path d="M.5 13.500V2L2 .5 3.500 2 5 .5 6.500 2 8 .5 9.500 2 11 .5 13 2v11.500z" fill="#dfe8f6" stroke="#6b85b0"/><path d="M2 5.500h9m-9 2h9m-9 2h9m-9 2h9" stroke="#8ea5ca"/></svg></button>
   <button aria-label="Page header"><svg width="14" height="13" viewBox="0 0 14 13"><path d="M.5.5h13v12H.5z" fill="#fbeeee" stroke="#b0605c"/><path d="M0 1.500h14" stroke="#c4706a" stroke-width="3"/><text x="1.500" y="10.500" font-family="Liberation Sans" font-weight="bold" font-size="8" fill="#4b1010">A</text><path d="M8 5.500h4m-4 2h4m-4 2h4" stroke="#c4706a"/></svg></button>
   <button aria-label="Page footer"><svg width="14" height="13" viewBox="0 0 14 13"><path d="M.5.5h13v12H.5z" fill="#fbeeee" stroke="#b0605c"/><path d="M0 11.500h14" stroke="#c4706a" stroke-width="3"/><text x="1.500" y="8" font-family="Liberation Sans" font-weight="bold" font-size="8" fill="#4b1010">A</text><path d="M8 3.500h4m-4 2h4m-4 2h4" stroke="#c4706a"/></svg></button>
   <button aria-label="Group header"><svg width="14" height="14"><use href="#win"/><path d="M0 2h14" stroke="#4a7bd6" stroke-width="4"/></svg></button>
   <button aria-label="Group footer"><svg width="14" height="14"><use href="#win"/><path d="M0 12h14" stroke="#4a7bd6" stroke-width="4"/></svg></button>
   <button aria-label="Data band"><svg width="14" height="14"><use href="#win"/><path d="M2.500 3.500h9v7h-9z" fill="#fff" stroke="#5b82c4"/><path d="M2 4h10" stroke="#3766bd" stroke-width="2"/><path d="M4 7.500h2m2 0h2m-6 2h2m2 0h2" stroke="#7c98c8"/></svg></button>
   <button aria-label="Cross tab"><svg width="14" height="14"><use href="#win"/><path d="M2.500 2.500h2v2h-2zM6.500 2.500h5v2h-5zM2.500 6.500h2v5h-2zM6 9.500h4.500v-3M8 7.500l-2 2 2 2" fill="none" stroke="#4d72ac"/></svg></button>
   <button aria-label="Text"><svg width="14" height="13" viewBox="0 0 14 13"><path d="M0 .5h13.500v11H0" fill="#f0f5fc" stroke="#9db4d8"/><text x="0" y="7.500" font-family="Liberation Sans" font-weight="bold" font-size="8" fill="#111">A</text><path d="M8 3.500h4m-4 2h4M1 9.500h11" stroke="#6d87b5"/></svg></button>
   <button aria-label="Image"><svg width="14" height="14" viewBox="0 0 14 14"><path d="M.5.5h13v13H.5z" fill="#e8f1fc" stroke="#6d87b5"/><path d="M1 10l4-4 3 3 2-2 3.500 3v3.500H1z" fill="#6b92cd" stroke="#2b3f66"/><circle cx="9.500" cy="4" r="2" fill="#f47a3a"/></svg></button>
   <button aria-label="Bar code"><svg width="15" height="14" viewBox="0 0 15 14"><path d="M.5.5h14v13H.5z" fill="#fff" stroke="#444"/><path d="M2.500 1v12M12.500 1v12" stroke="#000" stroke-width="1.500"/><path d="M5 1v6m2.500-6v6M10 1v6" stroke="#000" stroke-width="1.500"/><text x="3.500" y="13" font-family="Liberation Sans" font-size="6" font-weight="bold">123</text></svg></button>
   <button aria-label="Panel"><svg width="14" height="14" viewBox="0 0 14 14"><path d="M.5.5h13v13H.5z" fill="url(#pg1)" stroke="#2f5cc0" stroke-dasharray="1 1"/></svg></button>
   <button aria-label="Horizontal line"><svg width="12" height="12"><path d="M0 5.500h12" stroke="#000"/></svg></button>
   <button aria-label="Vertical line"><svg width="12" height="12"><path d="M5.500 0v12" stroke="#000"/></svg></button>
   <button aria-label="Rectangle"><svg width="16" height="12"><rect x=".5" y=".5" width="15" height="11" fill="none" stroke="#000"/></svg></button>
   <button aria-label="Rounded rectangle"><svg width="16" height="12"><rect x=".5" y=".5" width="15" height="11" rx="2.500" fill="none" stroke="#000"/></svg></button>
   <button aria-label="Chart"><svg width="16" height="14" viewBox="0 0 16 14"><path d="M.5 13V3l2-2" fill="none" stroke="#4c6186"/><path d="M2.500 7.500h3v6h-3z" fill="#4a7de0" stroke="#24468d"/><path d="M6.500 1.500h3v12h-3z" fill="#f8cb3d" stroke="#a97b12"/><path d="M11.500 4.500h3v9h-3z" fill="#e35a35" stroke="#8f2811"/></svg></button>
  </aside>

  <div class="center fill0 d-flex flex-column">
   <div class="docs d-flex flex-shrink-0">
    <button class="dt a"><svg width="11" height="13"><use href="#doc"/></svg>Page1</button>
    <button class="dt b"><svg width="14" height="14" viewBox="0 0 14 14"><path d="M.5.5h7l3 3v10H.5z" fill="#fff" stroke="#3f6dab"/><circle cx="7" cy="7" r="3.500" fill="#d9eaf9" stroke="#56697f" stroke-width="1.300"/><path d="M9.500 9.500l3.500 3.500" stroke="#c47b2c" stroke-width="2.500"/></svg>Preview</button>
   </div>
   <div class="bar d-flex align-items-center cond flex-shrink-0">
    <span class="grip"></span>
    <button class="gap-1" style="margin-left:8px"><svg width="16" height="15" viewBox="0 0 16 15"><path d="M4.500.5h7v5h-7z" fill="#fff" stroke="#75808f"/><path d="M.5 5.500h15v6H.5z" fill="#a9b2c0" stroke="#555f70"/><path d="M3.500 9.500h9v5h-9z" fill="#fff" stroke="#555f70"/><path d="M5 11.500h6m-6 2h3" stroke="#8794ab"/><path d="M11 7.500h2" stroke="#35c04a"/></svg>Print</button>
    <button class="gap-1" style="margin-left:11px"><svg width="17" height="14" viewBox="0 0 17 14"><path d="M.5 13V3.500h5l1 1.500h6v3" fill="#f3cb62" stroke="#9b7529"/><path d="M.5 13.500l3-6.500h13l-3.500 6.500z" fill="#ffe59a" stroke="#a27a28"/><path d="M8 2.500q4-3 6 1m1-3v3h-3" fill="none" stroke="#5a7fb2"/></svg>Open</button>
    <button style="margin-left:11px;gap:6px"><svg width="14" height="14"><use href="#save"/></svg>Save</button>
    <button style="margin-left:8px" aria-label="Save options"><svg width="6" height="4"><use href="#dn"/></svg></button>
    <button class="gap-1" style="margin-left:11px"><svg width="16" height="15" viewBox="0 0 16 15"><path d="M1.500 5.500L6 1.500l4 4v8h-9z" fill="#dfe8f4" stroke="#5e7396"/><path d="M3 8h5m-5 2h3" stroke="#6d87b0"/><path d="M5.500 5.500h10v8h-10z" fill="#fff" stroke="#5e7396"/><path d="M5.500 5.500l5 4 5-4" fill="none" stroke="#5e7396"/><path d="M11 3h3v3h-3z" fill="#d8453c"/></svg>Send E-Mail</button>
    <button style="margin-left:5px" aria-label="Send options"><svg width="6" height="4"><use href="#dn"/></svg></button>
    <span class="sepa" style="margin:0 3px 0 8px"></span>
    <button class="ib" aria-label="Bookmarks"><svg width="14" height="14"><use href="#win"/><path d="M3 3.500h4m-2 2h2m-2 2h2m-4 2h2m-2 2h8M8 3.500h2m-2 2h3m-3 2h3m-5 2h5" stroke="#5472a3"/></svg></button>
    <button class="ib" aria-label="Parameters"><svg width="12" height="15" viewBox="0 0 12 15"><path d="M.5 2.500h11v12H.5z" fill="#edf3fb" stroke="#8299bd"/><path d="M3 2.500q3-4 6 0z" fill="#b3c1d6" stroke="#667a99"/><path d="M4 7q0-1.500 2-1.500T8 7 6 9.500V11m0 1v1" fill="none" stroke="#4b608c"/></svg></button>
    <button class="ib" aria-label="Thumbnails"><svg width="15" height="15" viewBox="0 0 15 15"><path d="M.5.5h9v14h-9z" fill="#fff" stroke="#8097bd"/><path d="M0 1.500h14" stroke="#3f6fdf" stroke-width="3"/><path d="M2 5.500h7m-7 2h7m-7 2h7m-7 2h7" stroke="#8ca0c5"/><path d="M10.500 3.500h4v11h-4zM10.500 7h4m-4 4h4" fill="#dce6f5" stroke="#44597f"/></svg></button>
    <span class="sepa" style="margin:0 2px 0 3px"></span>
    <button class="ib" aria-label="Find"><svg width="16" height="14" viewBox="0 0 16 14"><path d="M4.500.5h2v3h3v-3h2l1 4 2.500 5v3.500H10V8H6v5H.5V9.500L3 4.500z" fill="#9fbbe4" stroke="#2b4f8e"/><path d="M1 10.500h4.500m4.500 0h5M3.500 5h3m3 0h3" stroke="#2b4f8e" stroke-width="1.500"/></svg></button>
    <span class="sepa" style="margin:0 3px 0 4px"></span>
    <button class="ib" aria-label="Full screen"><svg width="15" height="13" viewBox="0 0 15 13"><path d="M.5.5h14v12H.5z" fill="#f0f5fc" stroke="#6b8fcb"/><path d="M2.500 2.500h10v8h-10z" fill="#719cf0" stroke="#3c68c1"/><path d="M4 4.500h7m-7 2h7m-7 2h4" stroke="#e4eeff"/></svg></button>
    <button class="ib" aria-label="One page"><svg width="15" height="15"><use href="#grn"/><path d="M4.500 2.500h6v10h-6z" fill="#fff" stroke="#4a6d9a"/><path d="M6 4.500h3m-3 2h3m-3 2h3m-3 2h3" stroke="#7191bb"/></svg></button>
    <button class="ib" aria-label="Two pages"><svg width="15" height="15"><use href="#grn"/><path d="M2.500 3.500h4v7h-4zM8.500 3.500h4v7h-4z" fill="#fff" stroke="#4a6d9a"/><path d="M4 5.500h2m-2 2h2m4-2h2m-2 2h2" stroke="#7191bb"/></svg></button>
    <button class="selo" style="width:26px" aria-label="Page width"><svg width="15" height="14" viewBox="0 0 15 14"><path d="M1.500.5h12v13h-12z" fill="#f3f7fd" stroke="#5476ad"/><path d="M4 2.500h7m-7 9h7M4 4.500h7m-7 5h7M5 7h5" stroke="#5b6c88"/><path d="M0 7l4-3v6zM15 7l-4-3v6z" fill="#3c70c8"/></svg></button>
    <button class="ib" aria-label="Multiple pages"><svg width="15" height="15"><use href="#grn"/><path d="M3 3h3.500v3.500H3zM8.500 3H12v3.500H8.500zM3 8.500h3.500V12H3zM8.500 8.500H12V12H8.500z" fill="#fff" stroke="#5c82a5" stroke-width=".5"/></svg></button>
    <button aria-label="More"><svg width="6" height="4"><use href="#dn"/></svg></button>
   </div>
   <div class="canvas fill0 d-flex">
    <article class="sheet fill0">
     <svg class="wm"><text transform="rotate(-45 761 407)" x="761" y="407" text-anchor="end">DEMO</text></svg>
     <div class="position-relative">
     <h1>Arrival List</h1>
     <div class="params"><b>Date From</b>   <b>To</b>  <b>Order By</b>   Room</div>
     <table class="rep">
      <colgroup><col style="width:64px"><col style="width:128px"><col><col style="width:110px"><col style="width:150px"><col style="width:80px"><col style="width:48px"><col style="width:118px"><col style="width:41px"></colgroup>
      <thead><tr><th>Res. No</th><th>Guest</th><th>Room</th><th class="r">Rate (Rs)</th><th>Arrival</th><th>Departure</th><th class="r">Pax</th><th>Res.Type</th><th>User</th></tr></thead>
      <tbody>
      <tr><td>RES1</td><td class="g">Dr.test</td><td>107 - Queen</td><td class="r">456</td><td>2012-07-02 12:00 PM</td><td>2012-07-08</td><td class="r">2/0</td><td>Confirm Booking</td><td>admin</td></tr>
      <tr><td>RES2</td><td class="g">Dr.sdgfsadg</td><td>104 - King</td><td class="r">456</td><td>2012-07-08 12:00 PM</td><td>2012-07-13</td><td class="r">2/2</td><td>Confirm Booking</td><td>admin</td></tr>
      <tr><td>RES2</td><td class="g">Dr.sdgfsadg</td><td>105 - King</td><td class="r">456</td><td>2012-07-08 12:00 PM</td><td>2012-07-13</td><td class="r">2/2</td><td>Confirm Booking</td><td>admin</td></tr>
      <tr><td>RES2</td><td class="g">Dr.sdgfsadg</td><td>101 - King</td><td class="r">456</td><td>2012-07-08 12:00 PM</td><td>2012-07-13</td><td class="r">2/2</td><td>Confirm Booking</td><td>admin</td></tr>
      </tbody>
      <tfoot><tr><td colspan="3">Total Reservation<span class="fw-normal ms-4 ps-1">#(4)</span></td><td colspan="4" class="r">8/6</td><td colspan="2"></td></tr></tfoot>
     </table></div>
    </article>
    <div class="sb d-flex flex-column" style="margin:4px 3px 0 0">
     <button aria-label="Scroll up" style="color:#31466b"><svg width="10" height="5" viewBox="0 0 6 4" preserveAspectRatio="none"><use href="#up"/></svg></button>
     <div class="th d-flex align-items-center justify-content-center" style="height:178px"><i></i></div>
     <button class="mt-auto" aria-label="Scroll down" style="color:#31466b"><svg width="10" height="5" viewBox="0 0 6 4" preserveAspectRatio="none"><use href="#dn"/></svg></button>
    </div>
   </div>
   <div class="foot d-flex cond flex-shrink-0">
    <div class="bar d-flex align-items-center flex-grow-1">
     <span class="grip"></span>
     <button class="ib" style="margin-left:4px" aria-label="First page"><svg width="10" height="10" viewBox="0 0 10 10"><path d="M.5 0v10h2V0zM9 0v10L3 5z" fill="#a9bad2" stroke="#7e94b4" stroke-width=".8"/></svg></button>
     <button class="ib" aria-label="Previous page"><svg width="7" height="10" viewBox="0 0 7 10"><path d="M6 1v8L1 5z" fill="#a9bad2" stroke="#7e94b4"/></svg></button>
     <span class="sepa" style="margin:0 9px 0 2px"></span><span>Page 1 of 1</span><span class="sepa" style="margin:0 4px 0 11px"></span>
     <button class="ib" aria-label="Next page"><svg width="7" height="10" viewBox="0 0 7 10"><path d="M1 1v8l5-4z" fill="#a9bad2" stroke="#7e94b4"/></svg></button>
     <button class="ib" aria-label="Last page"><svg width="10" height="10" viewBox="0 0 10 10"><path d="M7.500 0v10h2V0zM1 0v10l6-5z" fill="#a9bad2" stroke="#7e94b4" stroke-width=".8"/></svg></button>
    </div>
    <div class="bar d-flex align-items-center pe-1" style="width:290px">
     <span class="grip"></span>
     <button class="ib" style="margin-left:4px" aria-label="Single page"><svg width="10" height="12"><path d="M.5.5h9v11h-9z" fill="#e6effb" stroke="#5b83bd"/></svg></button>
     <button class="ib" aria-label="Continuous"><svg width="10" height="13"><use href="#two"/></svg></button>
     <button class="selo" style="width:26px" aria-label="Multiple"><svg width="12" height="13" viewBox="0 0 12 13"><path d="M.5 0v5h4V0m3 0v5h4V0M.5 13V7.500h4V13m3 0V7.500h4V13" fill="#eef5fd" stroke="#6d8fc0"/></svg></button>
     <span class="sepa" style="margin:0 5px 0 4px"></span><span>105%</span>
     <input type="range" class="rg flex-grow-1 mx-1" min="0" max="200" value="94" aria-label="Preview zoom">
    </div>
   </div>
  </div>

  <aside class="props d-flex flex-column flex-shrink-0">
   <div class="ptabs d-flex flex-shrink-0"><button class="rt on">Properties</button><button class="rt">Dictionary</button><button class="rt">Report Tree</button></div>
   <div class="pbody fill0 d-flex flex-column">
    <button class="combo cond flex-shrink-0"><b>Report:</b> Report<svg class="ms-auto" width="6" height="4"><use href="#dn"/></svg></button>
    <div class="pt d-flex align-items-center cond flex-shrink-0">
     <button aria-label="Alphabetical"><svg width="16" height="18" viewBox="0 0 16 18"><text x="0" y="8" font-family="Liberation Sans" font-size="9" font-weight="bold" fill="#2d4fa0">A</text><text x="0" y="17" font-family="Liberation Sans" font-size="9" font-weight="bold" fill="#a52a3c">Z</text><path d="M12.500 2v12M10 11l2.500 4 2.500-4z" stroke="#111" fill="#111"/></svg></button>
     <button class="selo" aria-label="Categorized"><svg width="18" height="17" viewBox="0 0 18 17"><rect x="1.500" y="1.500" width="5" height="5" fill="#fff" stroke="#333"/><rect x="1.500" y="10.500" width="5" height="5" fill="#fff" stroke="#333"/><path d="M3 4h2m-1-1v2m-1 8h2m-1-1v2" stroke="#222"/><path d="M8 2.500h4m1 0h4m-9 3h4m1 0h4m-9 2h4m1 0h4m-9 4h4m1 0h4m-9 3h4m1 0h4" stroke="#9a7b3c"/></svg></button>
     <span class="sepa" style="margin:0 4px"></span>
     <button class="selo" aria-label="Properties"><svg width="12" height="12" viewBox="0 0 12 12"><path d="M.5.5h11v11H.5z" fill="#fff" stroke="#33559a"/><path d="M2 3.500h1m1 0h6m-8 2h1m1 0h6m-8 2h1m1 0h6m-8 2h1m1 0h6" stroke="#33559a"/></svg></button>
     <button aria-label="Events"><svg width="12" height="14" viewBox="0 0 12 14"><path d="M5 .5h5.500L7.500 5H11L2 13.500 5 7.500H1.500z" fill="#ffd23f" stroke="#b8892a" stroke-width=".8"/></svg></button>
     <span class="sepa" style="margin:0 9px 0 4px"></span>
     <button style="width:auto;gap:7px">Parameters <svg width="6" height="4"><use href="#dn"/></svg></button>
    </div>
    <div class="gridbox fill0 d-flex">
     <div class="fill0 overflow-hidden">
     <table class="pg">
      <colgroup><col style="width:16px"><col style="width:113px"><col></colgroup>
      <tbody>
      <tr class="h"><td><div class="tg"></div></td><th colspan="2">1. Page</th></tr>
      <tr><td></td><th>Paper Size</th><td><b>A4</b></td></tr>
      <tr><td></td><th>Paper Source of First Page</th><td></td></tr>
      <tr><td></td><th>Paper Source of Other Pages</th><td></td></tr>
      <tr><td></td><th>Page Width</th><td><b>8.27</b></td></tr>
      <tr><td></td><th>Page Height</th><td><b>11.69</b></td></tr>
      <tr><td></td><th>Orientation</th><td>Portrait</td></tr>
      <tr><td><div class="tg plus"></div></td><th>Watermark</th><td><b>(Watermark)</b></td></tr>
      <tr><td></td><th>Margins</th><td><b>0.2; 0.3; 0.2; 0.2</b></td></tr>
      <tr><td></td><th>Number of Copies</th><td>1</td></tr>
      <tr class="h"><td><div class="tg"></div></td><th colspan="2">2. Page Additional</th></tr>
      <tr><td></td><th>Stretch to Print Area</th><td>False</td></tr>
      <tr><td></td><th>Stop Before Print</th><td>0</td></tr>
      <tr><td></td><th>Title before Header</th><td>False</td></tr>
      <tr><td></td><th>Unlimited Height</th><td>False</td></tr>
      <tr><td></td><th>Unlimited Breakable</th><td>True</td></tr>
      <tr><td></td><th>Segment per Width</th><td>1</td></tr>
      <tr><td></td><th>Segment per Height</th><td>1</td></tr>
      <tr class="h"><td><div class="tg"></div></td><th colspan="2">3. Columns</th></tr>
      <tr><td></td><th>Columns</th><td>0</td></tr>
      <tr><td></td><th>Column Width</th><td>0</td></tr>
      <tr><td></td><th>Column Gaps</th><td>0</td></tr>
      <tr><td></td><th>Right to Left</th><td>False</td></tr>
      <tr class="h"><td><div class="tg"></div></td><th colspan="2">4. Appearance</th></tr>
      <tr><td><div class="tg plus"></div></td><th>Brush</th><td><span class="sw"></span><b>Solid</b></td></tr>
      <tr><td><div class="tg plus"></div></td><th>Border</th><td><b>None</b></td></tr>
      <tr><td></td><th></th><td></td></tr>
      </tbody></table></div>
     <div class="sb d-flex flex-column">
      <button aria-label="Scroll up" style="color:#31466b"><svg width="10" height="5" viewBox="0 0 6 4" preserveAspectRatio="none"><use href="#up"/></svg></button>
      <div class="th d-flex align-items-center justify-content-center" style="height:246px"><i></i></div>
      <button class="mt-auto" aria-label="Scroll down" style="color:#31466b"><svg width="10" height="5" viewBox="0 0 6 4" preserveAspectRatio="none"><use href="#dn"/></svg></button>
     </div>
    </div>
    <div class="desc flex-shrink-0"></div>
   </div>
  </aside>
 </main>
 <footer class="status d-flex align-items-center flex-shrink-0">
  <button class="gap-2" style="margin-left:9px">Inches <svg width="6" height="4"><use href="#up"/></svg></button>
  <span class="sepa" style="margin:0 9px 0 6px"></span>
  <button style="gap:10px"><svg width="7" height="11" viewBox="0 0 7 11"><path d="M.5.5v10l6-5z" fill="#3b9b35" stroke="#1d6420"/></svg>Report Checker</button>
  <div class="zoomz ms-auto h-100 d-flex align-items-center">
   <button class="zb" aria-label="Whole page"><svg width="11" height="13"><path d="M.5.5h10v11H.5z" fill="#fff" stroke="#44618f"/><path d="M2 3.500h7m-7 2h7m-7 2h7m-7 2h7" stroke="#6f8ab4"/></svg></button>
   <button class="zb" aria-label="Fit width"><svg width="13" height="12" viewBox="0 0 15 14"><path d="M2.500.5h10v13h-10z" fill="#f3f7fd" stroke="#44618f"/><path d="M5 2.500h5m-5 9h5M5 4.500h5m-5 5h5M5 7h5" stroke="#5b6c88"/><path d="M0 7l4-3v6zM15 7l-4-3v6z" fill="#2d5caa"/></svg></button>
   <button class="zb" aria-label="Actual size"><svg width="15" height="14" viewBox="0 0 15 14"><path d="M1.500 8V.5H8M8 .5h6V13" fill="none" stroke="#44618f" stroke-dasharray="1 1"/><path d="M5 1l5 5m0-3v3H7" fill="none" stroke="#223d6d"/><text x="1" y="13" font-family="Liberation Sans" font-weight="bold" font-size="7" fill="#223d6d">100</text></svg></button>
   <span style="margin:2px 6px 0 8px">100%</span>
   <button aria-label="Zoom out"><svg width="16" height="16" viewBox="0 0 16 16"><circle cx="8" cy="8" r="7.300" fill="#e6effa" stroke="#4d73a8"/><path d="M4 8h8" stroke="#33557f" stroke-width="2"/></svg></button>
   <input type="range" class="rg flex-grow-1" min="0" max="200" value="100" aria-label="Zoom">
   <button aria-label="Zoom in"><svg width="16" height="16" viewBox="0 0 16 16"><circle cx="8" cy="8" r="7.300" fill="#e6effa" stroke="#4d73a8"/><path d="M4 8h8M8 4v8" stroke="#33557f" stroke-width="2"/></svg></button>
  </div>
 </footer>
</div>
</div>
<script src="https://cdn.jsdelivr.net/npm/bootstrap@5.3.0/dist/js/bootstrap.bundle.min.js"></script>
</body>
</html>
